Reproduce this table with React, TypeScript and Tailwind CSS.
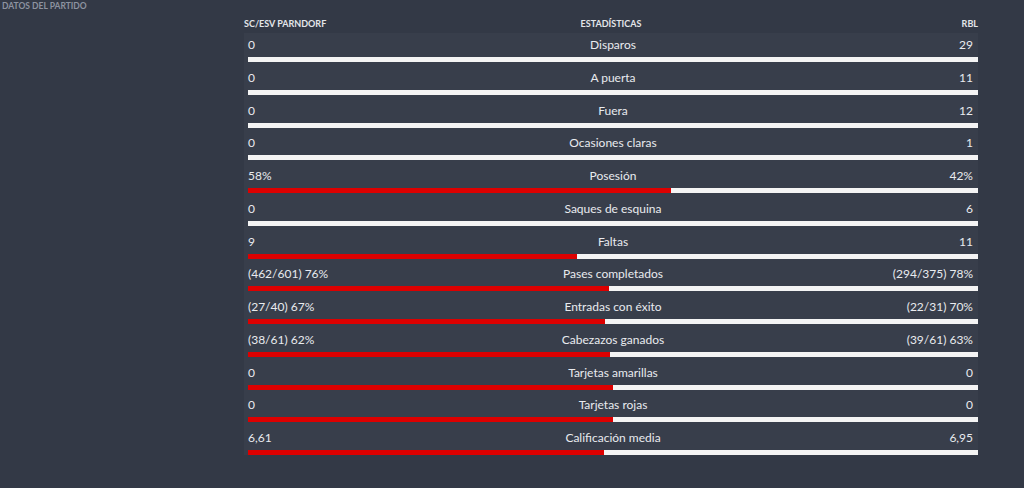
type Stat = {
  label: string;
  home: string;
  away: string;
  pct: number;
};

const stats: Stat[] = [
  { label: "Disparos", home: "0", away: "29", pct: 0 },
  { label: "A puerta", home: "0", away: "11", pct: 0 },
  { label: "Fuera", home: "0", away: "12", pct: 0 },
  { label: "Ocasiones claras", home: "0", away: "1", pct: 0 },
  { label: "Posesión", home: "58%", away: "42%", pct: 58 },
  { label: "Saques de esquina", home: "0", away: "6", pct: 0 },
  { label: "Faltas", home: "9", away: "11", pct: 45 },
  { label: "Pases completados", home: "(462/601) 76%", away: "(294/375) 78%", pct: 49.4 },
  { label: "Entradas con éxito", home: "(27/40) 67%", away: "(22/31) 70%", pct: 48.9 },
  { label: "Cabezazos ganados", home: "(38/61) 62%", away: "(39/61) 63%", pct: 49.6 },
  { label: "Tarjetas amarillas", home: "0", away: "0", pct: 50 },
  { label: "Tarjetas rojas", home: "0", away: "0", pct: 50 },
  { label: "Calificación media", home: "6,61", away: "6,95", pct: 48.7 },
];

const StatRow = ({ stat }: { stat: Stat }) => {
  return (
    <div className="h-[32.75px] pl-[4px] last:h-[29px]">
      <div className="grid h-[14px] grid-cols-[1fr_auto_1fr] items-center text-[12px] leading-[14px] text-[#e9ebef]">
        <span className="mt-[5px]">{stat.home}</span>
        <span className="mt-[5px] text-center">{stat.label}</span>
        <span className="mt-[5px] pr-[5px] text-right">{stat.away}</span>
      </div>
      <div className="mt-[10px] flex h-[5px] w-full bg-[#f4f4f4]">
        <div className="h-full bg-[#dd0000]" style={{ width: `${stat.pct}%` }} />
      </div>
    </div>
  );
};

export default function App() {
  return (
    <div className="h-[488px] w-[1024px] bg-[#333946] font-['Lato',sans-serif]">
      <p className="pl-[2px] pt-[1px] text-[8.5px] font-bold uppercase leading-[10px] text-[#8d93a0]">
        Datos del partido
      </p>
      <div className="ml-[244px] w-[734px]">
        <div className="grid h-[22px] grid-cols-[1fr_auto_1fr] items-end pb-[4px] text-[9px] font-bold uppercase leading-[10px] text-[#e3e6ea]">
          <span>SC/ESV Parndorf</span>
          <span className="text-center">Estadísticas</span>
          <span className="text-right">RBL</span>
        </div>
        <div className="bg-[#383e4b]">
          {stats.map((s) => (
            <StatRow key={s.label} stat={s} />
          ))}
        </div>
      </div>
    </div>
  );
}
